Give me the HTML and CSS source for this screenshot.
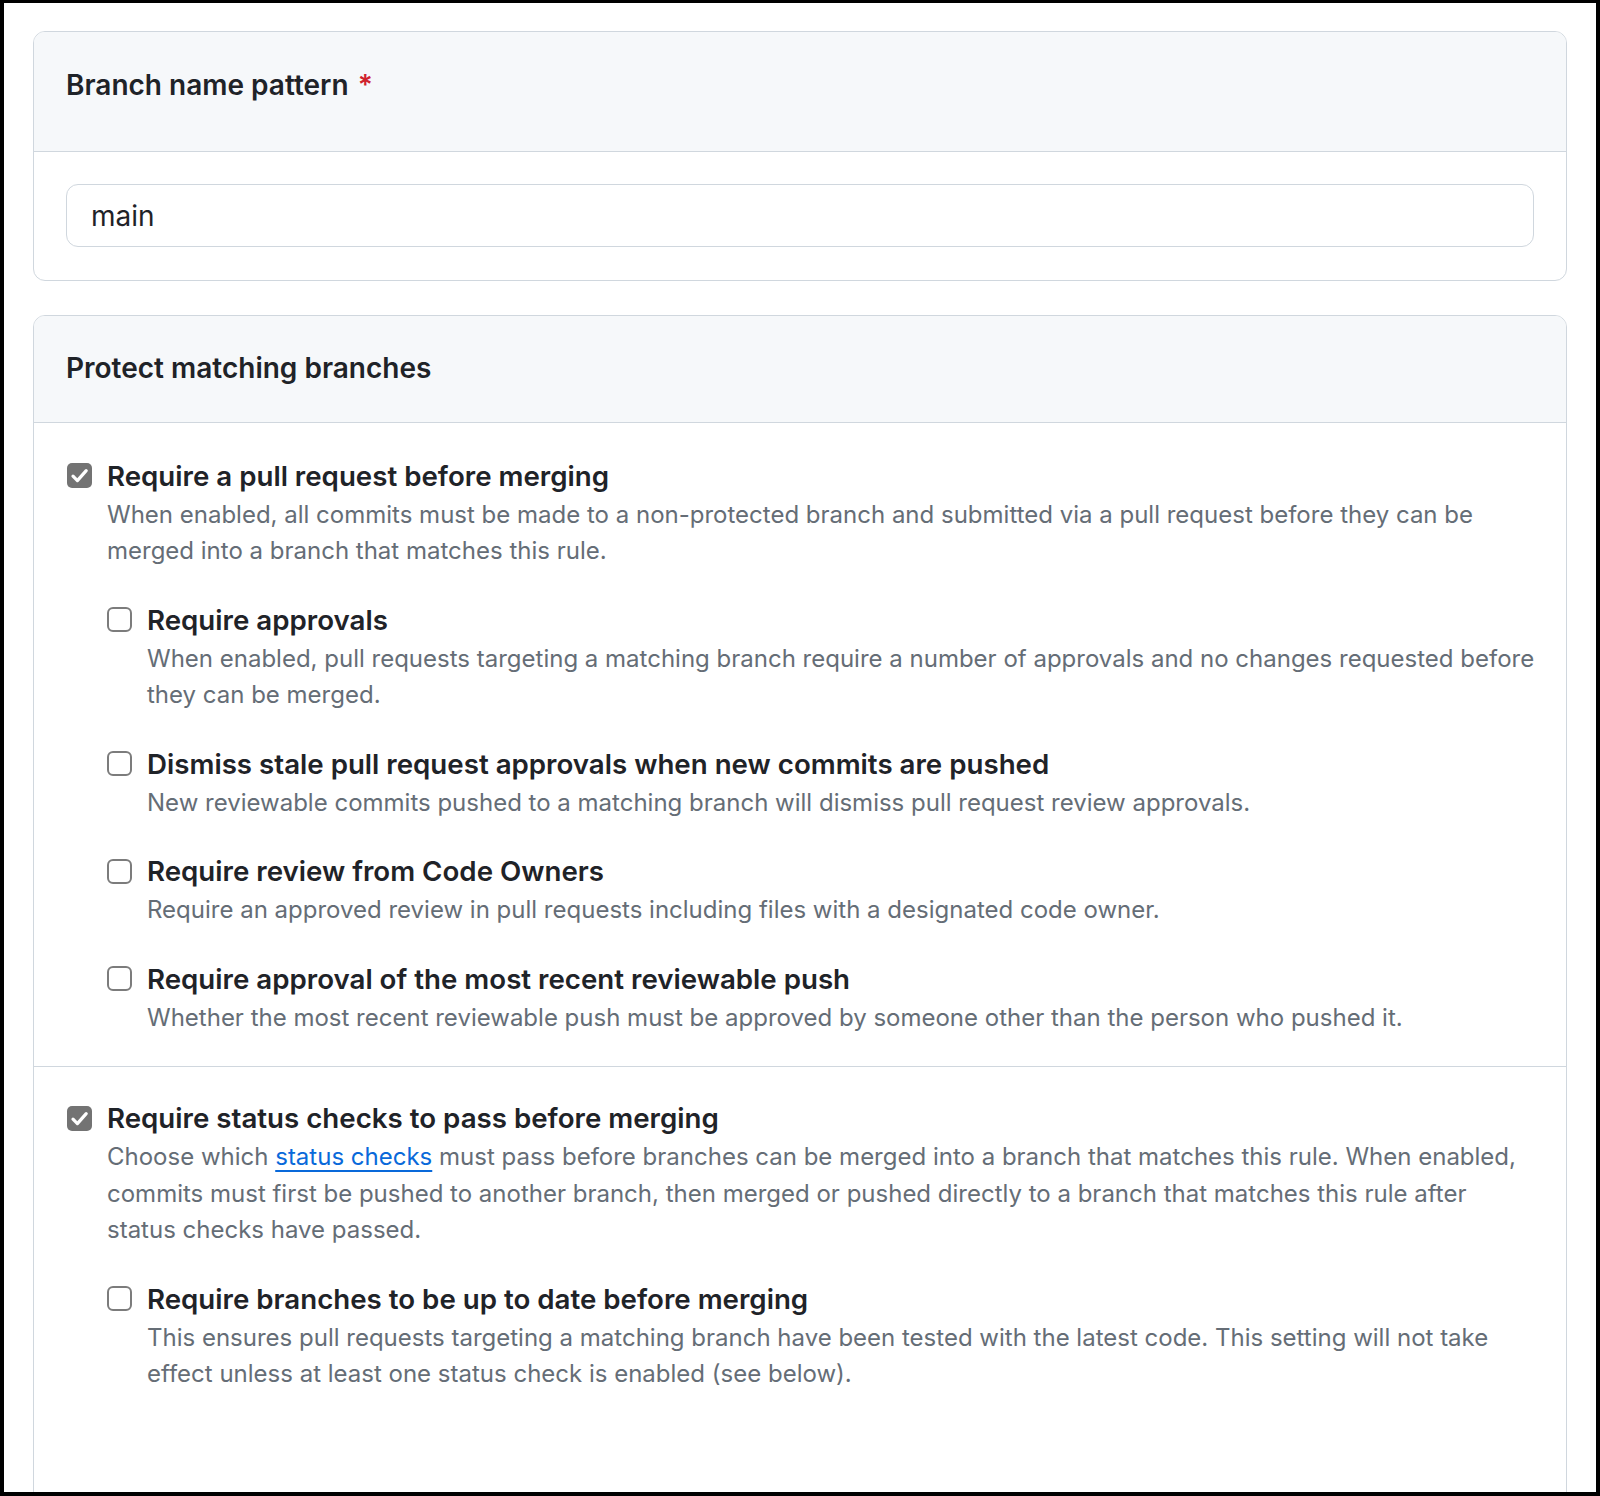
FILE: index.html
```html
<!DOCTYPE html>
<html lang="en">
<head>
<meta charset="utf-8">
<title>Branch protection rule</title>
<link rel="stylesheet" href="styles.css">
</head>
<body>
<div class="frame">
  <section class="box box-pattern">
    <div class="box-header box-header-pattern">
      <h2 class="box-title">Branch name pattern <span class="required">*</span></h2>
    </div>
    <div class="box-body">
      <div class="text-input">main</div>
    </div>
  </section>

  <section class="box box-protect">
    <div class="box-header box-header-protect">
      <h2 class="box-title">Protect matching branches</h2>
    </div>

    <div class="rule-section">
      <div class="option">
        <span class="checkbox checked"><svg viewBox="0 0 25 25" width="25" height="25"><path d="M6 13.2 L10.4 17.6 L19.2 7.6" fill="none" stroke="#fff" stroke-width="3.2" stroke-linecap="round" stroke-linejoin="round"/></svg></span>
        <div class="option-text">
          <div class="option-title">Require a pull request before merging</div>
          <p class="option-desc">When enabled, all commits must be made to a non-protected branch and submitted via a pull request before they can be merged into a branch that matches this rule.</p>
        </div>
      </div>
      <div class="sub-options">
        <div class="option">
          <span class="checkbox"></span>
          <div class="option-text">
            <div class="option-title">Require approvals</div>
            <p class="option-desc">When enabled, pull requests targeting a matching branch require a number of approvals and no changes requested before they can be merged.</p>
          </div>
        </div>
        <div class="option">
          <span class="checkbox"></span>
          <div class="option-text">
            <div class="option-title">Dismiss stale pull request approvals when new commits are pushed</div>
            <p class="option-desc">New reviewable commits pushed to a matching branch will dismiss pull request review approvals.</p>
          </div>
        </div>
        <div class="option">
          <span class="checkbox"></span>
          <div class="option-text">
            <div class="option-title">Require review from Code Owners</div>
            <p class="option-desc">Require an approved review in pull requests including files with a designated code owner.</p>
          </div>
        </div>
        <div class="option">
          <span class="checkbox"></span>
          <div class="option-text">
            <div class="option-title">Require approval of the most recent reviewable push</div>
            <p class="option-desc">Whether the most recent reviewable push must be approved by someone other than the person who pushed it.</p>
          </div>
        </div>
      </div>
    </div>

    <div class="rule-section rule-section-last">
      <div class="option">
        <span class="checkbox checked"><svg viewBox="0 0 25 25" width="25" height="25"><path d="M6 13.2 L10.4 17.6 L19.2 7.6" fill="none" stroke="#fff" stroke-width="3.2" stroke-linecap="round" stroke-linejoin="round"/></svg></span>
        <div class="option-text">
          <div class="option-title">Require status checks to pass before merging</div>
          <p class="option-desc">Choose which <a class="link" href="#">status checks</a> must pass before branches can be merged into a branch that matches this rule. When enabled, commits must first be pushed to another branch, then merged or pushed directly to a branch that matches this rule after status checks have passed.</p>
        </div>
      </div>
      <div class="sub-options">
        <div class="option">
          <span class="checkbox"></span>
          <div class="option-text">
            <div class="option-title">Require branches to be up to date before merging</div>
            <p class="option-desc">This ensures pull requests targeting a matching branch have been tested with the latest code. This setting will not take effect unless at least one status check is enabled (see below).</p>
          </div>
        </div>
      </div>
    </div>
  </section>
</div>
</body>
</html>
```
FILE: styles.css
```css
* {
  box-sizing: border-box;
}

html, body {
  margin: 0;
  padding: 0;
  background: #000;
}

body {
  padding: 3px 4px 4px 4px;
  font-family: "Inter", "Noto Sans", sans-serif;
  color: #1f2328;
}

.frame {
  background: #fff;
  height: 1489px;
  overflow: hidden;
  padding: 28px 29px 0 29px;
}

.box {
  border: 1px solid #d0d7de;
  border-radius: 12px;
  background: #fff;
}

.box-protect {
  margin-top: 34px;
  min-height: 1300px;
}

.box-header {
  background: #f6f8fa;
  border-bottom: 1px solid #d0d7de;
  border-radius: 11px 11px 0 0;
  padding: 0 32px;
}

.box-header-pattern {
  padding-top: 33px;
  padding-bottom: 46px;
}

.box-header-protect {
  padding-top: 32px;
  padding-bottom: 34px;
}

.box-title {
  margin: 0;
  font-size: 28px;
  line-height: 40px;
  font-weight: 600;
  color: #1f2328;
}

.required {
  color: #cf222e;
  margin-left: 2px;
}

.box-body {
  padding: 32px 32px 33px 32px;
}

.text-input {
  height: 63px;
  border: 1px solid #d0d7de;
  border-radius: 12px;
  padding: 0 24px;
  display: flex;
  align-items: center;
  font-size: 28px;
  color: #1f2328;
  background: #fff;
}

.rule-section {
  padding: 32.5px 32px 30px 33px;
  border-bottom: 1px solid #d0d7de;
}

.rule-section-last {
  padding-top: 31px;
  border-bottom: none;
}

.option {
  display: flex;
  align-items: flex-start;
}

.sub-options {
  padding-left: 40px;
  margin-right: -14px;
}

.sub-options .option {
  margin-top: 30px;
}

.checkbox {
  flex: none;
  width: 25px;
  height: 25px;
  margin-top: 7.5px;
  margin-right: 15px;
  border: 2px solid #7c7c7c;
  border-radius: 6px;
  background: #fff;
  display: block;
}

.checkbox.checked {
  border: none;
  background: #737373;
  border-radius: 5px;
}

.checkbox svg {
  display: block;
}

.option-text {
  flex: 1;
  min-width: 0;
}

.option-title {
  font-size: 27.7px;
  line-height: 40px;
  font-weight: 600;
  color: #1f2328;
}

.option-desc {
  margin: 1px 0 0 0;
  font-size: 24px;
  line-height: 36.5px;
  color: #656d76;
}

.link {
  color: #0969da;
  text-decoration: underline;
  text-decoration-thickness: 2px;
  text-underline-offset: 5px;
}
```
